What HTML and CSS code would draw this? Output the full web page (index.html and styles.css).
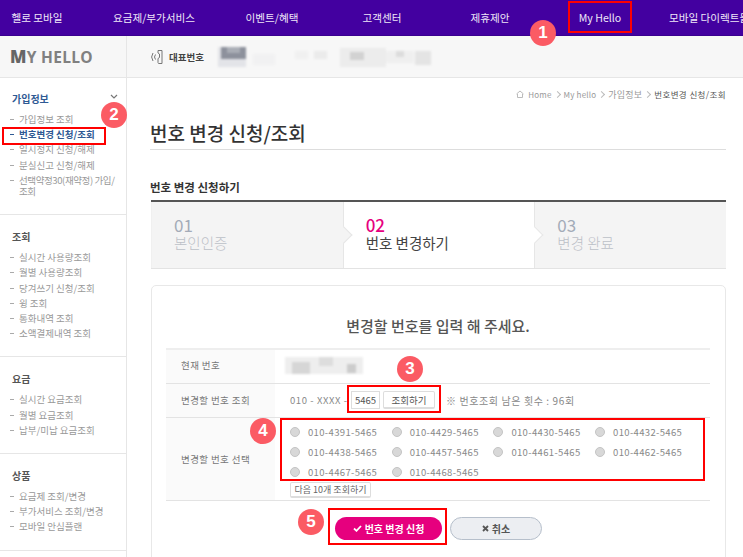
FILE: index.html
```html
<!DOCTYPE html>
<html>
<head>
    <meta charset="utf-8">
    <link rel="stylesheet" href="styles.css">
</head>
<body>
<div class="gnb">
    <span>헬로 모바일</span><span>요금제/부가서비스</span><span>이벤트/혜택</span><span>고객센터</span><span>제휴제안</span><span>My Hello</span><span class="clip">모바일 다이렉트몰</span>
</div>
<div class="subbar">
    <div class="logo"><b>M</b>Y HELLO</div>
    <div class="rep">
        <svg width="14" height="16" viewBox="0 0 14 16" fill="none" stroke="#777" stroke-width="1"><path d="M8 1.5h4v13H8.500a1 1 0 0 1-.5-1V9.500l1.500-1V5L8 4z"/><path d="M5.500 5.500a4 4 0 0 0 0 5M3 4a7 7 0 0 0 0 8"/></svg>
        <span class="rep-label">대표번호</span>
        <svg class="mosaic" width="216" height="22" viewBox="0 0 216 22">
            <rect x="0" y="1" width="28" height="20" fill="#e3e4e8"/><rect x="3" y="1" width="25" height="12" fill="#8d919c"/><rect x="9" y="1" width="13" height="6" fill="#a9adb5"/>
            <rect x="35" y="8" width="22" height="11" fill="#f1f1f2"/><rect x="77" y="5" width="13" height="8" fill="#f0f0f0"/><rect x="96" y="5" width="13" height="8" fill="#ebebeb"/>
            <rect x="122" y="2" width="46" height="19" fill="#ececec"/><rect x="132" y="6" width="14" height="8" fill="#d2d2d2"/><rect x="168" y="5" width="28" height="12" fill="#efefef"/><rect x="178" y="5" width="8" height="6" fill="#dcdcdc"/><rect x="197" y="5" width="16" height="14" fill="#e4e4e4"/>
        </svg>
    </div>
</div>
<div class="layout">
    <div class="side">
        <div class="group">
            <div class="group-title blue">가입정보</div>
            <svg class="chev" width="8" height="6" viewBox="0 0 8 6" fill="none" stroke="#777" stroke-width="1.200"><path d="M1 1l3 3 3-3"/></svg>
            <ul>
                <li>가입정보 조회</li>
                <li class="on">번호변경 신청/조회</li>
                <li>일시정지 신청/해제</li>
                <li>분실신고 신청/해제</li>
                <li class="long">선택약정30(재약정) 가입/<br>조회</li>
            </ul>
        </div>
        <div class="group">
            <div class="group-title">조회</div>
            <ul>
                <li>실시간 사용량조회</li>
                <li>월별 사용량조회</li>
                <li>당겨쓰기 신청/조회</li>
                <li>윙 조회</li>
                <li>통화내역 조회</li>
                <li>소액결제내역 조회</li>
            </ul>
        </div>
        <div class="group">
            <div class="group-title">요금</div>
            <ul>
                <li>실시간 요금조회</li>
                <li>월별 요금조회</li>
                <li>납부/미납 요금조회</li>
            </ul>
        </div>
        <div class="group">
            <div class="group-title">상품</div>
            <ul>
                <li>요금제 조회/변경</li>
                <li>부가서비스 조회/변경</li>
                <li>모바일 안심플랜</li>
            </ul>
        </div>
    </div>
    <div class="main">
        <div class="crumb">
            <svg width="8" height="8" viewBox="0 0 8 8" fill="none" stroke="#bbb"><path d="M.5 4L4 1l3.500 3M1.500 4v3.500h5V4"/></svg>
            <span>Home</span><i></i><span>My hello</span><i></i><span class="ko">가입정보</span><i></i><span class="now">번호변경 신청/조회</span>
        </div>
        <h1>번호 변경 신청/조회</h1>
        <h2>번호 변경 신청하기</h2>
        <div class="steps">
            <div class="step"><b>01</b><span>본인인증</span></div>
            <div class="step active"><b>02</b><span>번호 변경하기</span></div>
            <div class="step last"><b>03</b><span>변경 완료</span></div>
        </div>
        <div class="card">
            <h3>변경할 번호를 입력 해 주세요.</h3>
            <table>
                <tr class="row-now">
                    <th>현재 번호</th>
                    <td><svg class="mosaic" width="78" height="17" viewBox="0 0 78 17"><rect width="78" height="17" fill="#eee"/><rect x="7" y="5" width="18" height="12" fill="#d6d6d6"/><rect x="34" y="0" width="14" height="9" fill="#ddd"/><rect x="62" y="7" width="9" height="9" fill="#ccc"/></svg></td>
                </tr>
                <tr class="row-find">
                    <th>변경할 번호 조회</th>
                    <td>
                        <div class="find">
                            <span class="num">010 - XXXX -</span>
                            <input class="last4" type="text" value="5465">
                            <button class="btn-sm find-btn">조회하기</button>
                            <span class="left-count">※ 번호조회 남은 횟수 : 96회</span>
                        </div>
                    </td>
                </tr>
                <tr class="row-pick">
                    <th>변경할 번호 선택</th>
                    <td>
                        <div class="picks">
                            <label><input type="radio">010-4391-5465</label>
                            <label><input type="radio">010-4429-5465</label>
                            <label><input type="radio">010-4430-5465</label>
                            <label><input type="radio">010-4432-5465</label>
                            <label><input type="radio">010-4438-5465</label>
                            <label><input type="radio">010-4457-5465</label>
                            <label><input type="radio">010-4461-5465</label>
                            <label><input type="radio">010-4462-5465</label>
                            <label><input type="radio">010-4467-5465</label>
                            <label><input type="radio">010-4468-5465</label>
                        </div>
                        <button class="btn-sm next-btn">다음 10개 조회하기</button>
                    </td>
                </tr>
            </table>
            <div class="actions">
                <button class="btn-pink"><svg width="9" height="7" viewBox="0 0 9 7" fill="none" stroke="#fff" stroke-width="1.800"><path d="M1 3.500l2.500 2.300L8 1"/></svg>번호 변경 신청</button>
                <button class="btn-grey"><svg width="7" height="7" viewBox="0 0 7 7" fill="none" stroke="#555" stroke-width="1.800"><path d="M1 1l5 5M6 1L1 6"/></svg>취소</button>
            </div>
        </div>
    </div>
</div>

<!-- annotations drawn over the screenshot -->
<div class="mark box1"></div>
<div class="mark box2"></div>
<div class="mark box3"></div>
<div class="mark box4"></div>
<div class="mark box5"></div>
<div class="badge b1">1</div>
<div class="badge b2">2</div>
<div class="badge b3">3</div>
<div class="badge b4">4</div>
<div class="badge b5">5</div>
</body>
</html>
```

FILE: styles.css
```css
html,body{margin:0;padding:0;height:557px;overflow:hidden;}
body{position:relative;background:#fff;color:#666;font-family:"Noto Sans CJK KR","Noto Sans",sans-serif;font-size:10px;}
ul{list-style:none;margin:0;padding:0;}
button{font-family:inherit;cursor:pointer;}

.gnb{height:35px;background:#4300a0;color:#efe8f8;display:grid;grid-template-columns:74px 160px 76px 144px 72px 148px 1fr;font-size:10.600px;line-height:35px;text-align:center;border-bottom:1px solid #3a0090;overflow:hidden;white-space:nowrap;}
.gnb .clip{text-align:left;margin-left:-5px;}

.subbar{height:41px;background:#f7f7f7;border-bottom:1px solid #e6e6e6;display:flex;align-items:center;}
.logo{width:116px;padding-left:10px;height:41px;line-height:41px;border-right:1px solid #e6e6e6;color:#808080;font-size:15.500px;font-weight:700;letter-spacing:.3px;font-family:"Open Sans",sans-serif;}
.logo b{font-size:17px;color:#666;}
.rep{display:flex;align-items:center;padding-left:23px;}
.rep-label{margin-left:5px;font-size:9.500px;font-weight:700;color:#444;}
.rep .mosaic{margin-left:14px;}
.mosaic{display:block;filter:blur(.8px);}

.layout{display:flex;}
.side{width:126px;border-right:1px solid #e6e6e6;flex:none;}
.group{position:relative;padding:16px 0 15px;border-bottom:1px solid #e6e6e6;}
.group:first-child{padding-top:15px;}
.group-title{padding-left:12px;font-size:10px;line-height:12px;font-weight:700;color:#555;margin-bottom:7px;}
.group-title.blue{color:#2f5a94;}
.chev{position:absolute;left:110px;top:16px;}
.group li{position:relative;padding:2px 4px 2px 19px;line-height:11.200px;font-size:9.500px;color:#999;white-space:nowrap;}
.group li.long{letter-spacing:-.4px;}
.group li:before{content:"";position:absolute;left:10px;top:7px;width:4px;height:1px;background:#aaa;}
.group li.on{color:#2f5a94;font-weight:700;}
.group li.on:before{background:#2f5a94;}

.main{flex:1;padding:10px 17px 0 24px;min-width:0;}
.crumb{display:flex;justify-content:flex-end;align-items:center;gap:3px;height:12px;font-size:8px;color:#999;letter-spacing:.2px;}
.crumb svg{margin-right:1px;}
.crumb i{width:4px;height:4px;border-top:1px solid #bbb;border-right:1px solid #bbb;transform:rotate(45deg);margin-right:1px;}
.crumb .ko{font-size:9px;}
.crumb .now{color:#555;font-size:8.500px;letter-spacing:.4px;}
h1{margin:19px 0 0 -1px;height:30px;line-height:28px;font-size:19px;font-weight:500;color:#333;border-bottom:1px solid #ddd;}
h2{margin:31px 0 7px -1px;font-size:11.500px;line-height:12px;font-weight:700;color:#333;}

.steps{display:flex;height:66px;background:#f4f4f4;border-top:2px solid #555;border-bottom:1px solid #e3e3e3;}
.step{position:relative;flex:1;padding:14px 0 0 22px;border-left:1px solid #e6e6e6;}
.step:first-child{border-left:1px solid #f0f0f0;}
.step b{display:block;font-size:17px;line-height:18px;font-weight:400;color:#a3abb8;}
.step span{display:block;font-size:14.500px;line-height:18px;font-weight:300;color:#bcc0c7;}
.step.active{background:#fff;}
.step.active b{color:#e6007e;font-weight:500;}
.step.active span{color:#444;font-weight:400;}
.step.active:before,.step.last:before{content:"";position:absolute;left:-6px;top:27px;width:11px;height:11px;transform:rotate(45deg);border-top:1px solid #e6e6e6;border-right:1px solid #e6e6e6;}
.step.active:before{background:#f4f4f4;}
.step.last:before{background:#fff;}

.card{margin-top:16px;height:300px;padding:0 15px 0 14px;border:1px solid #e8e8e8;border-radius:5px;}
h3{margin:33px 0 13px;height:16px;line-height:14px;text-align:center;font-size:15px;font-weight:500;color:#555;}
table{width:100%;border-collapse:collapse;border-top:2px solid #eee;}
tr{border-bottom:1px solid #e3e3e3;}
th{width:109px;background:#fafafa;padding:0 0 0 15px;text-align:left;box-sizing:border-box;font-size:9.500px;font-weight:400;color:#777;letter-spacing:.4px;}
td{padding:0 0 0 15px;vertical-align:middle;}
.row-now{height:34px;}
.row-now th,.row-now td{padding-bottom:2px;}
.row-now .mosaic{margin-left:-5px;}
.row-find{height:34px;}
.row-pick{height:83px;}
.row-pick td{vertical-align:top;padding-top:4px;}
.find{display:flex;align-items:center;}
.num{width:61px;letter-spacing:.6px;font-size:9.500px;color:#888;}
.last4{box-sizing:border-box;width:29px;height:18px;padding:0;border:1px solid #ddd;text-align:center;font-family:inherit;font-size:9.500px;color:#555;}
.btn-sm{box-sizing:border-box;height:18px;padding:0;background:#fff;border:1px solid #ddd;border-bottom-width:2px;border-radius:2px;font-size:9.500px;color:#555;}
.find-btn{width:52px;margin-left:3px;}
.left-count{margin-left:11px;font-size:10px;color:#888;letter-spacing:.6px;}
.picks{display:grid;grid-template-columns:repeat(4,101.700px);grid-auto-rows:20px;}
.picks label{display:flex;align-items:center;font-size:9.500px;letter-spacing:.35px;color:#888;}
.picks input{appearance:none;box-sizing:border-box;width:10px;height:10px;margin:0 8px 0 0;flex:none;border:1px solid #c4c4c4;border-radius:50%;background:#d8d8d8;}
.next-btn{display:block;width:81px;height:16px;margin-top:0;font-size:9px;color:#666;}

.actions{display:flex;gap:8px;margin:16px 0 0 169px;}
.btn-pink,.btn-grey{display:flex;align-items:center;justify-content:center;gap:3px;box-sizing:border-box;height:23px;border-radius:12px;font-size:10px;font-weight:700;padding:0;}
.btn-pink{width:107px;background:#e6007e;border:0;color:#fff;}
.btn-grey{width:92px;background:#eceef2;border:1px solid #b6bfcb;color:#555;}

.mark{position:absolute;box-sizing:border-box;border:2px solid #f00;}
.box1{left:568px;top:1px;width:64px;height:32px;}
.box2{left:2px;top:127px;width:104px;height:18px;}
.box3{left:347px;top:385px;width:94px;height:28px;}
.box4{left:280px;top:418px;width:425px;height:63px;}
.box5{left:328px;top:508px;width:119px;height:37px;}
.badge{position:absolute;width:26px;height:26px;border-radius:50%;background:#fb5b64;color:#fff;font-family:"Liberation Sans",sans-serif;font-size:17px;font-weight:700;line-height:26px;text-align:center;}
.b1{left:530px;top:20px;}
.b2{left:101px;top:102px;}
.b3{left:397px;top:356px;}
.b4{left:250px;top:418px;}
.b5{left:298px;top:509px;}
```
